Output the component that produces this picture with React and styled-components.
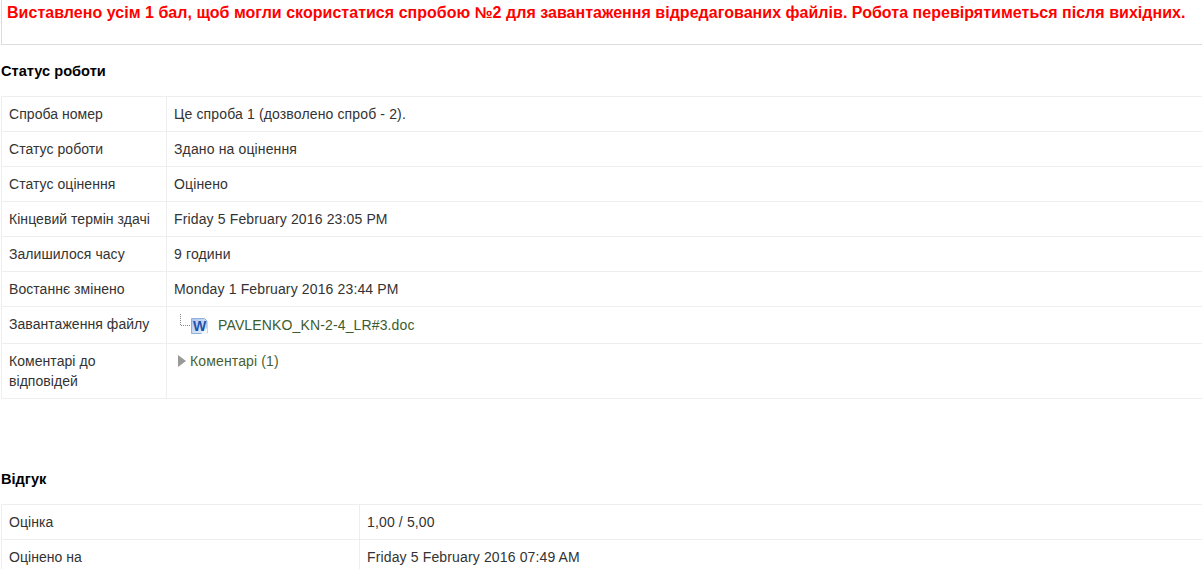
import { createGlobalStyle } from "styled-components";
import styled from "styled-components";

const GlobalStyle = createGlobalStyle`
  html, body {
    margin: 0;
    padding: 0;
    background: #fff;
    overflow: hidden;
  }
  body {
    font-family: "Liberation Sans", Arial, sans-serif;
    font-size: 14px;
    line-height: 20px;
    letter-spacing: 0.14px;
    color: #333;
  }
`;

const Page = styled.div`
  width: 1202px;
  height: 569px;
  overflow: hidden;
  padding-left: 1px;
  box-sizing: border-box;
`;

const Notice = styled.div`
  width: 1204px;
  height: 46px;
  margin-top: -1px;
  padding: 1px 5px 0;
  box-sizing: border-box;
  border: 1px solid #ddd;
  color: #f00;
  font-size: 16px;
  font-weight: bold;
  line-height: 24px;
  letter-spacing: 0.03px;
  white-space: nowrap;
`;

const Heading = styled.h3`
  margin: 0;
  height: ${(p) => p.$h}px;
  padding-top: ${(p) => p.$top}px;
  box-sizing: border-box;
  font-size: 14.6px;
  line-height: 20px;
  font-weight: bold;
  letter-spacing: 0;
  color: #000;
`;

const Table = styled.table`
  width: 1204px;
  table-layout: fixed;
  border-collapse: collapse;
  margin-bottom: ${(p) => p.$after || 0}px;
`;

const Row = styled.tr`
  height: ${(p) => p.$h || 35}px;
`;

const LabelCell = styled.td`
  width: ${(p) => p.$w}px;
  box-sizing: border-box;
  padding: 7px;
  border: 1px solid #eee;
  vertical-align: top;
  letter-spacing: 0.05px;
  color: #333;
`;

const ValueCell = styled.td`
  padding: 7px;
  border: 1px solid #eee;
  vertical-align: top;
  color: #333;
`;

const FileLine = styled.div`
  display: flex;
  align-items: center;
  height: 22px;
  padding-left: 6px;
`;

const FileLink = styled.a`
  color: #3d5c2e;
  margin-left: 10px;
  text-decoration: none;
`;

const CommentToggle = styled.div`
  display: flex;
  align-items: center;
  padding-left: 4px;
  gap: 4px;
`;

const CommentLink = styled.a`
  color: #4a5f30;
  text-decoration: none;
`;

const Arrow = styled.span`
  width: 0;
  height: 0;
  border-style: solid;
  border-width: 6px 0 6px 8px;
  border-color: transparent transparent transparent #999;
`;

const WordIcon = () => (
  <svg width="28" height="22" viewBox="0 0 28 22">
    <defs>
      <linearGradient id="wordBg" x1="0" y1="0" x2="1" y2="1">
        <stop offset="0" stopColor="#a9c4ea" />
        <stop offset="1" stopColor="#eef3fb" />
      </linearGradient>
    </defs>
    <path d="M0.5 0v11.5H11" fill="none" stroke="#888" strokeDasharray="1 1" />
    <path d="M11.5 4.5h13l2.5 2.5v12.5h-15.5z" fill="url(#wordBg)" stroke="#8fb0dd" />
    <text x="13" y="16.5" fontFamily="Liberation Sans" fontSize="14" fontWeight="bold" letterSpacing="0" fill="#1d52ad">W</text>
    <path d="M21 20l6-6v6z" fill="#f4f7fb" />
  </svg>
);

const statusRows = [
  ["Спроба номер", "Це спроба 1 (дозволено спроб - 2)."],
  ["Статус роботи", "Здано на оцінення"],
  ["Статус оцінення", "Оцінено"],
  ["Кінцевий термін здачі", "Friday 5 February 2016 23:05 PM"],
  ["Залишилося часу", "9 години"],
  ["Востаннє змінено", "Monday 1 February 2016 23:44 PM"],
];

const feedbackRows = [
  ["Оцінка", "1,00 / 5,00"],
  ["Оцінено на", "Friday 5 February 2016 07:49 AM"],
];

const App = () => {
  return (
    <Page>
      <GlobalStyle />
      <Notice>
        Виставлено усім 1 бал, щоб могли скористатися спробою №2 для завантаження відредагованих файлів. Робота перевірятиметься після вихідних.
      </Notice>
      <Heading $top={16} $h={51}>Статус роботи</Heading>
      <Table $after={69}>
        <tbody>
          {statusRows.map(([label, value]) => (
            <Row key={label}>
              <LabelCell $w={165}>{label}</LabelCell>
              <ValueCell>{value}</ValueCell>
            </Row>
          ))}
          <Row $h={37}>
            <LabelCell $w={165}>Завантаження файлу</LabelCell>
            <ValueCell>
              <FileLine>
                <WordIcon />
                <FileLink>PAVLENKO_KN-2-4_LR#3.doc</FileLink>
              </FileLine>
            </ValueCell>
          </Row>
          <Row $h={55}>
            <LabelCell $w={165}>Коментарі до відповідей</LabelCell>
            <ValueCell>
              <CommentToggle>
                <Arrow />
                <CommentLink>Коментарі (1)</CommentLink>
              </CommentToggle>
            </ValueCell>
          </Row>
        </tbody>
      </Table>
      <Heading $top={1} $h={36}>Відгук</Heading>
      <Table>
        <tbody>
          {feedbackRows.map(([label, value]) => (
            <Row key={label}>
              <LabelCell $w={358}>{label}</LabelCell>
              <ValueCell>{value}</ValueCell>
            </Row>
          ))}
        </tbody>
      </Table>
    </Page>
  );
};

export default App;
